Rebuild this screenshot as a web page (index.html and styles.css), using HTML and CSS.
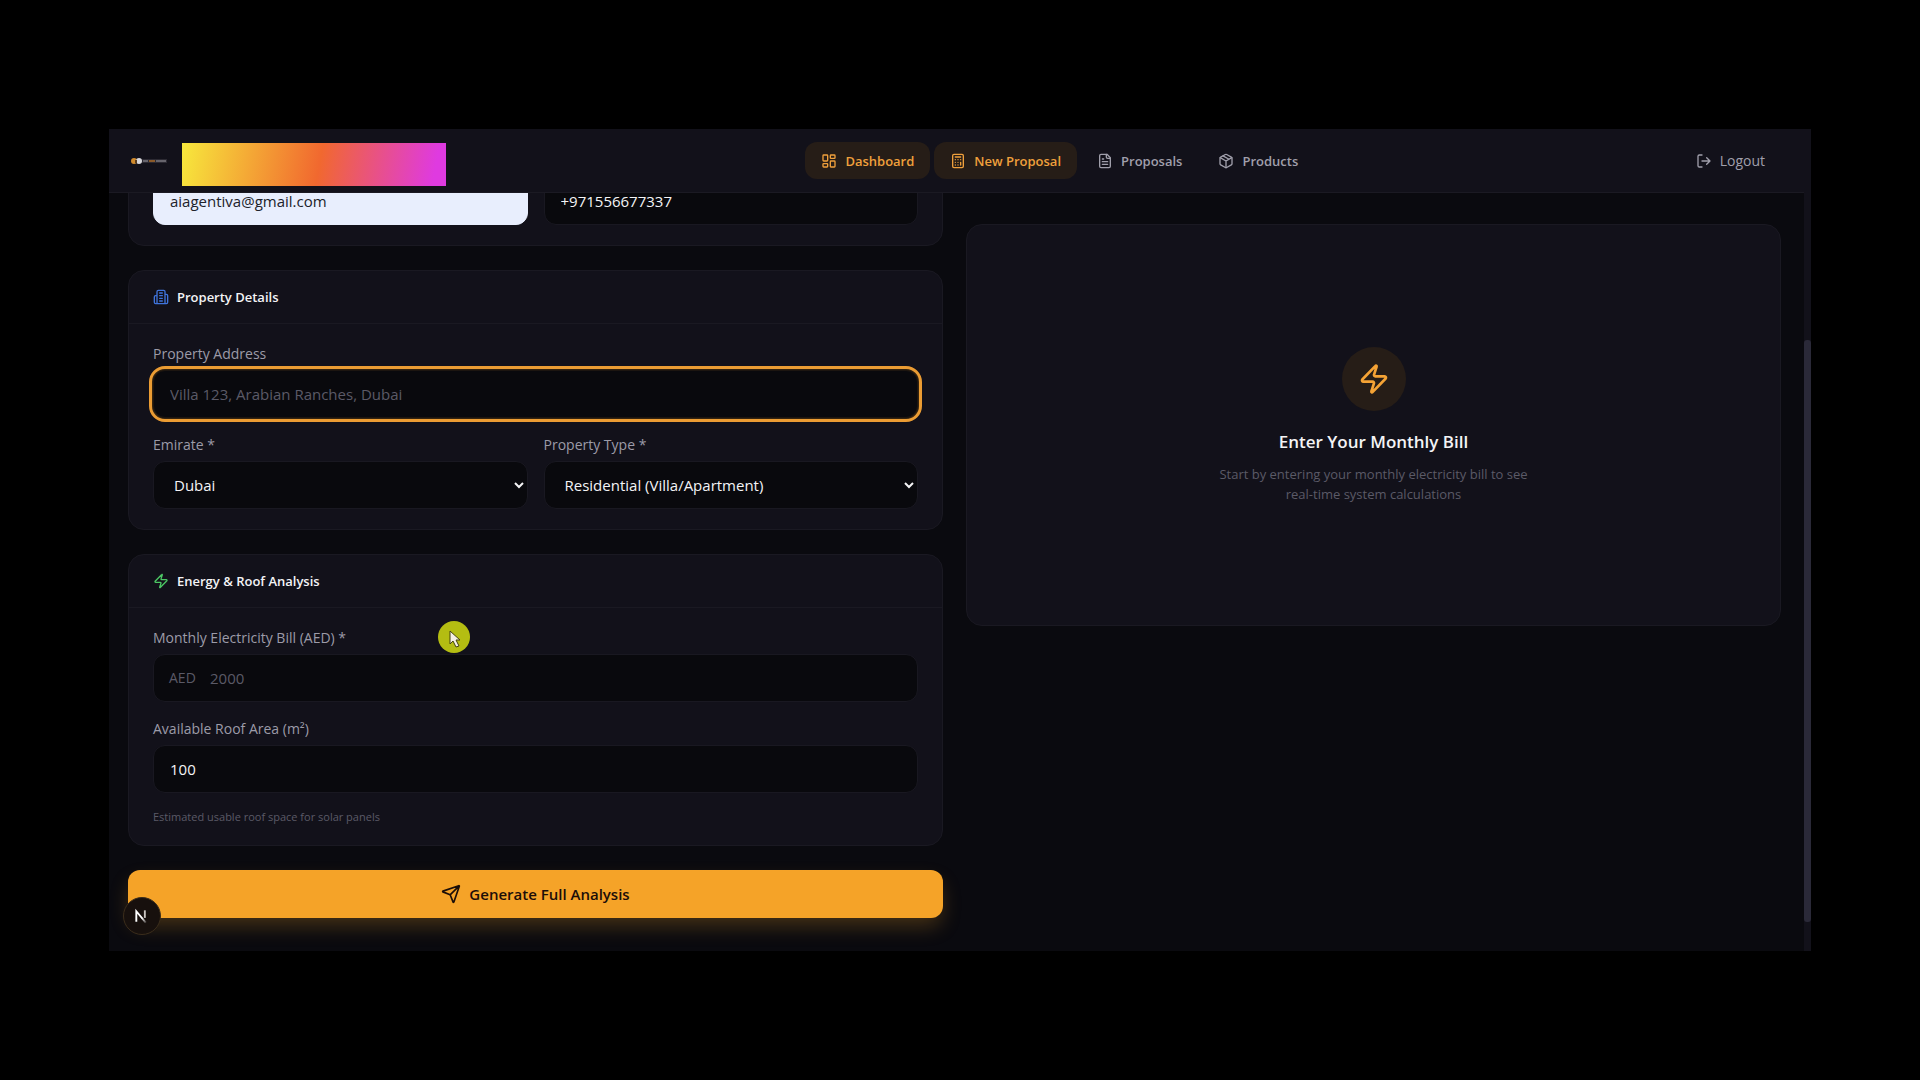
FILE: index.html
```html
<!DOCTYPE html>
<html lang="en">
<head>
<meta charset="utf-8">
<meta name="viewport" content="width=device-width, initial-scale=1">
<title>New Proposal</title>
<link rel="stylesheet" href="styles.css">
</head>
<body>
<div class="window">
  <div class="app">
    <header class="topbar">
      <div class="brand">
        <svg class="brand-logo" viewBox="0 0 36 10" aria-hidden="true">
          <rect x="10" y="3" width="26" height="4" fill="#2c2a33"/>
          <rect x="12" y="4" width="5" height="2" fill="#66646c"/>
          <rect x="18" y="4" width="6" height="2" fill="#8a5a2a"/>
          <rect x="25" y="4" width="10" height="2" fill="#66646c"/>
          <circle cx="3" cy="5" r="3" fill="#d08a2c"/>
          <circle cx="8" cy="5" r="3" fill="#d8d8dc"/>
          <rect x="4" y="4" width="2" height="3" fill="#5a3c1c"/>
        </svg>
        <span class="brand-cover"></span>
      </div>
      <nav class="nav">
        <a class="nav-link active" href="#">
          <svg class="icon" viewBox="0 0 24 24"><rect x="3" y="3" width="7" height="9" rx="1"/><rect x="14" y="3" width="7" height="5" rx="1"/><rect x="14" y="12" width="7" height="9" rx="1"/><rect x="3" y="16" width="7" height="5" rx="1"/></svg>
          Dashboard</a>
        <a class="nav-link active" href="#">
          <svg class="icon" viewBox="0 0 24 24"><rect x="4" y="2" width="16" height="20" rx="2"/><path d="M8 6h8M16 14v4M16 10h.01M12 10h.01M8 10h.01M12 14h.01M8 14h.01M12 18h.01M8 18h.01"/></svg>
          New Proposal</a>
        <a class="nav-link" href="#">
          <svg class="icon" viewBox="0 0 24 24"><path d="M15 2H6a2 2 0 0 0-2 2v16a2 2 0 0 0 2 2h12a2 2 0 0 0 2-2V7Z"/><path d="M14 2v4a2 2 0 0 0 2 2h4M10 9H8M16 13H8M16 17H8"/></svg>
          Proposals</a>
        <a class="nav-link" href="#">
          <svg class="icon" viewBox="0 0 24 24"><path d="M11 21.73a2 2 0 0 0 2 0l7-4A2 2 0 0 0 21 16V8a2 2 0 0 0-1-1.73l-7-4a2 2 0 0 0-2 0l-7 4A2 2 0 0 0 3 8v8a2 2 0 0 0 1 1.73z"/><path d="M12 22V12M3.3 7 12 12l8.7-5M7.5 4.27l9 5.15"/></svg>
          Products</a>
      </nav>
      <button class="logout" type="button">
        <svg class="icon" viewBox="0 0 24 24"><path d="M9 21H5a2 2 0 0 1-2-2V5a2 2 0 0 1 2-2h4M16 17l5-5-5-5M21 12H9"/></svg>
        Logout</button>
    </header>
    <main class="content">
      <form class="form">
        <section class="card contact">
          <div class="row">
            <input class="control autofilled" type="email" aria-label="Email" value="aiagentiva@gmail.com">
            <input class="control" type="tel" aria-label="Phone" value="+971556677337">
          </div>
        </section>
        <section class="card">
          <h2 class="card-head">
            <svg class="icon blue" viewBox="0 0 24 24"><path d="M6 22V4a2 2 0 0 1 2-2h8a2 2 0 0 1 2 2v18ZM6 10H4a2 2 0 0 0-2 2v8a2 2 0 0 0 2 2h2M18 8h2a2 2 0 0 1 2 2v10a2 2 0 0 1-2 2h-2M10 6h4M10 10h4M10 14h4M10 18h4"/></svg>
            Property Details</h2>
          <div class="card-body">
            <div class="field">
              <label for="address">Property Address</label>
              <input class="control focused" id="address" type="text" placeholder="Villa 123, Arabian Ranches, Dubai">
            </div>
            <div class="row">
              <div class="field">
                <label for="emirate">Emirate *</label>
                <select class="control" id="emirate"><option>Dubai</option></select>
              </div>
              <div class="field">
                <label for="type">Property Type *</label>
                <select class="control" id="type"><option>Residential (Villa/Apartment)</option></select>
              </div>
            </div>
          </div>
        </section>
        <section class="card">
          <h2 class="card-head">
            <svg class="icon green" viewBox="0 0 24 24"><path d="M4 14a1 1 0 0 1-.78-1.63l9.9-10.2a.5.5 0 0 1 .86.46l-1.92 6.02A1 1 0 0 0 13 10h7a1 1 0 0 1 .78 1.63l-9.9 10.2a.5.5 0 0 1-.86-.46l1.92-6.02A1 1 0 0 0 11 14z"/></svg>
            Energy &amp; Roof Analysis</h2>
          <div class="card-body">
            <div class="field">
              <label for="bill">Monthly Electricity Bill (AED) *</label>
              <div class="prefixed">
                <span class="prefix">AED</span>
                <input class="control" id="bill" type="text" inputmode="numeric" placeholder="2000">
              </div>
            </div>
            <div class="field">
              <label for="roof">Available Roof Area (m²)</label>
              <input class="control" id="roof" type="text" inputmode="numeric" value="100">
              <p class="hint">Estimated usable roof space for solar panels</p>
            </div>
          </div>
        </section>
        <button class="submit" type="button">
          <svg class="icon" viewBox="0 0 24 24"><path d="M14.536 21.686a.5.5 0 0 0 .937-.024l6.5-19a.496.496 0 0 0-.635-.635l-19 6.5a.5.5 0 0 0-.024.937l7.93 3.18a2 2 0 0 1 1.112 1.11zM21.854 2.147l-10.94 10.939"/></svg>
          Generate Full Analysis</button>
      </form>
      <aside class="card empty">
        <span class="empty-badge">
          <svg class="icon" viewBox="0 0 24 24"><path d="M4 14a1 1 0 0 1-.78-1.63l9.9-10.2a.5.5 0 0 1 .86.46l-1.92 6.02A1 1 0 0 0 13 10h7a1 1 0 0 1 .78 1.63l-9.9 10.2a.5.5 0 0 1-.86-.46l1.92-6.02A1 1 0 0 0 11 14z"/></svg>
        </span>
        <h3>Enter Your Monthly Bill</h3>
        <p>Start by entering your monthly electricity bill to see real-time system calculations</p>
      </aside>
    </main>
  </div>
  <div class="scrollbar"><div class="thumb"></div></div>
  <button class="dev-badge" type="button" aria-label="Developer tools">
    <svg viewBox="0 0 38 38" aria-hidden="true">
      <defs><linearGradient id="fade" x1="0" y1="0" x2="1" y2="1"><stop offset="0.6" stop-color="#fff"/><stop offset="1" stop-color="#fff" stop-opacity="0.2"/></linearGradient></defs>
      <path d="M13 25V14L23 26" fill="none" stroke="url(#fade)" stroke-width="2"/>
      <path d="M22 13v8" stroke="#c9c4c0" stroke-width="2"/>
    </svg>
  </button>
  <div class="pointer">
    <svg viewBox="0 0 32 32" aria-hidden="true"><path d="M12 10v13l3-3 3 6 3-1-3-6h4z" fill="#f4efe4" stroke="#45430f" stroke-width="1"/></svg>
  </div>
</div>
</body>
</html>
```
FILE: styles.css
```css
* {
  box-sizing: border-box;
}

body {
  margin: 0;
  height: 100vh;
  padding: 129px 109px;
  display: flex;
  background: #000;
  color: #f4f4f6;
  font-family: "Open Sans", "Noto Sans", sans-serif;
  font-size: 14px;
  line-height: 20px;
}

h2, h3, p {
  margin: 0;
}

button, input, select {
  font-family: inherit;
}

.window {
  position: relative;
  flex: 1;
  display: flex;
  overflow: hidden;
  background: #0a0a0f;
}

.app {
  flex: 1;
  min-width: 0;
  display: flex;
  flex-direction: column;
}

.topbar {
  position: relative;
  z-index: 1;
  height: 64px;
  flex: none;
  padding: 0 23px 0 22px;
  display: flex;
  align-items: center;
  justify-content: space-between;
  background: #12111a;
  border-bottom: 1px solid #1b1a23;
}

.brand {
  display: flex;
  align-items: center;
  gap: 15px;
}

.brand-logo {
  width: 36px;
  height: 10px;
}

.brand-cover {
  width: 264px;
  height: 43px;
  margin-top: 8px;
  background: linear-gradient(100deg, #f7e83c, #f1682f 52%, #df3ae0 95%);
}

.nav {
  display: flex;
  gap: 4px;
}

.nav-link,
.logout {
  display: flex;
  align-items: center;
  gap: 8px;
  height: 37px;
  padding: 0 16px;
  border: 0;
  border-radius: 12px;
  background: none;
  color: #a09fab;
  font-size: 13px;
  font-weight: 600;
  text-decoration: none;
}

.nav-link.active {
  background: #261d17;
  color: #f0a03c;
}

.logout {
  padding-left: 22px;
  font-size: 14px;
  font-weight: 400;
}

.icon {
  width: 16px;
  height: 16px;
  flex: none;
  fill: none;
  stroke: currentColor;
  stroke-width: 2;
  stroke-linecap: round;
  stroke-linejoin: round;
}

.blue {
  color: #3f74dc;
}

.green {
  color: #4cc764;
}

.content {
  flex: 1;
  min-height: 0;
  display: grid;
  grid-template-columns: 1fr 1fr;
  grid-template-rows: minmax(0, 1fr);
  gap: 23px;
  padding: 0 23px 0 19px;
}

.form {
  min-height: 0;
  display: flex;
  flex-direction: column;
  justify-content: flex-end;
  gap: 24px;
  padding-bottom: 33px;
}

.card {
  flex: none;
  background: #12111a;
  border: 1px solid #1a1922;
  border-radius: 16px;
}

.contact {
  padding: 40px 24px 20px;
}

.card-head {
  height: 53px;
  padding: 0 24px;
  display: flex;
  align-items: center;
  gap: 8px;
  border-bottom: 1px solid #1a1922;
  font-size: 13px;
  font-weight: 600;
}

.card-body {
  display: flex;
  flex-direction: column;
  gap: 17px;
  padding: 20px 24px;
}

.row {
  display: grid;
  grid-template-columns: 1fr 1fr;
  gap: 16px;
}

.field {
  display: flex;
  flex-direction: column;
}

.field label {
  margin-bottom: 6px;
  color: #9c9ba8;
  font-weight: 500;
}

.control {
  width: 100%;
  height: 48px;
  padding: 0 16px;
  border: 1px solid #191821;
  border-radius: 12px;
  outline: 0;
  background: #09090d;
  color: #f4f4f6;
  font-size: 15px;
}

.control::placeholder {
  color: #5b5a67;
  opacity: 1;
}

.control.autofilled {
  background: #e8eefd;
  border-color: #e8eefd;
  color: #20222a;
}

.control.focused {
  border-color: #1c1510;
  outline: 3px solid #eb9c33;
  outline-offset: 1px;
  box-shadow: 0 0 0 1px #33230f;
}

.prefixed {
  position: relative;
}

.prefixed .control {
  padding-left: 56px;
}

.prefix {
  position: absolute;
  left: 16px;
  top: 14px;
  color: #5b5a67;
  font-weight: 500;
}

.hint {
  margin-top: 16px;
  color: #5b5a67;
  font-size: 11px;
  line-height: 16px;
}

.submit {
  height: 48px;
  flex: none;
  display: flex;
  align-items: center;
  justify-content: center;
  gap: 8px;
  border: 0;
  border-radius: 12px;
  background: #f5a328;
  box-shadow: 0 10px 20px -2px rgba(245, 163, 40, 0.25);
  color: #1c0e08;
  font-size: 15px;
  font-weight: 600;
}

.submit .icon {
  width: 20px;
  height: 20px;
}

.empty {
  align-self: start;
  margin-top: 31px;
  padding: 122px 24px 121px;
  display: flex;
  flex-direction: column;
  align-items: center;
  text-align: center;
}

.empty-badge {
  width: 64px;
  height: 64px;
  margin-bottom: 17px;
  display: grid;
  place-items: center;
  border-radius: 50%;
  background: #261d17;
  color: #f5a335;
}

.empty-badge .icon {
  width: 32px;
  height: 32px;
}

.empty h3 {
  margin-bottom: 8px;
  font-size: 17px;
  font-weight: 600;
  line-height: 28px;
}

.empty p {
  max-width: 328px;
  color: #5b5a67;
  font-size: 13px;
}

.scrollbar {
  width: 7px;
  padding: 211px 0 29px;
  display: flex;
  background: #12111a;
}

.thumb {
  flex: 1;
  border-radius: 3px;
  background: #2a2938;
}

.dev-badge {
  position: absolute;
  z-index: 2;
  left: 14px;
  bottom: 16px;
  width: 38px;
  height: 38px;
  padding: 0;
  border: 1px solid #3b2d1b;
  border-radius: 50%;
  background: #17100d;
}

.pointer {
  position: absolute;
  left: 329px;
  top: 492px;
  width: 32px;
  height: 32px;
  border-radius: 50%;
  background: #b4bd12;
}
```
